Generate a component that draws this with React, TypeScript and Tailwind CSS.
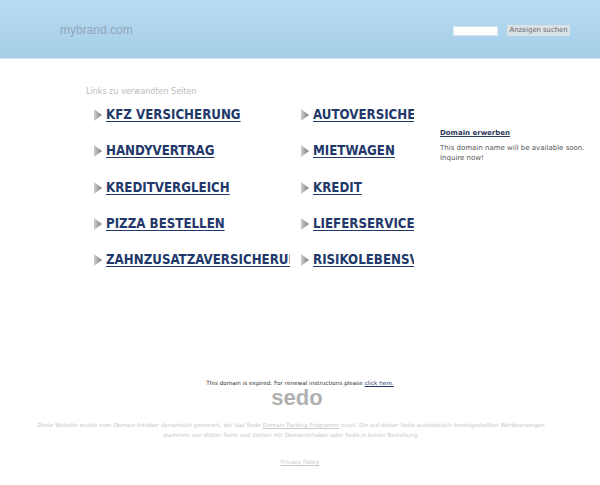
import React from "react";

const links: [string, string][] = [
  ["KFZ VERSICHERUNG", "AUTOVERSICHERUNG"],
  ["HANDYVERTRAG", "MIETWAGEN"],
  ["KREDITVERGLEICH", "KREDIT"],
  ["PIZZA BESTELLEN", "LIEFERSERVICE"],
  ["ZAHNZUSATZAVERSICHERUNG", "RISIKOLEBENSVERSICHERUNG"],
];

function Arrow() {
  return (
    <svg width="8" height="12" viewBox="0 0 8 12" className="shrink-0">
      <defs>
        <linearGradient id="ag" x1="0" y1="0" x2="1" y2="0">
          <stop offset="0" stopColor="#cfcfcf" />
          <stop offset="1" stopColor="#7a7a7a" />
        </linearGradient>
      </defs>
      <polygon points="0,0 8,6 0,12" fill="url(#ag)" />
    </svg>
  );
}

function LinkCell({ text, w }: { text: string; w: string }) {
  return (
    <div className={`flex items-center gap-[4px] overflow-hidden py-[3px] ${w}`}>
      <Arrow />
      <a
        href="#"
        className="whitespace-nowrap text-[#22386a] underline decoration-1 underline-offset-[2px] font-bold text-[13.2px] leading-[16px]"
        style={{ fontFamily: '"DejaVu Sans Condensed", "DejaVu Sans", sans-serif' }}
      >
        {text}
      </a>
    </div>
  );
}

export default function App() {
  const verd = { fontFamily: '"DejaVu Sans", Verdana, sans-serif' };
  return (
    <div className="w-[600px] h-[485px] bg-white overflow-hidden" style={verd}>
      <header className="h-[59px] bg-gradient-to-b from-[#b6dcf2] to-[#a5cde6] border-b border-[#cfe6f2] flex items-start">
        <div className="ml-[60px] mt-[22px] text-[12px] leading-[16px] text-[#92a6ba]" style={{ fontFamily: '"Liberation Sans", Arial, sans-serif' }}>
          mybrand.com
        </div>
        <div className="ml-auto mr-[30px] mt-[25px] flex items-center">
          <div className="w-[45px] h-[10px] bg-white border border-[#d6e6ef]" />
          <div className="ml-[9px] w-[63px] h-[11px] bg-[#d9e1e7] text-[6.8px] leading-[11px] text-[#666] text-center">
            Anzeigen suchen
          </div>
        </div>
      </header>

      <div className="flex">
        <div className="ml-[86px] mt-[27px] w-[335px]">
          <div className="text-[8px] leading-[12px] text-[#bbbbbb]">Links zu verwandten Seiten</div>
          <div className="ml-[8px] mt-[6px] flex flex-col gap-[14.25px]">
            {links.map(([a, b]) => (
              <div key={a} className="flex">
                <div className="w-[207px]">
                  <LinkCell text={a} w="w-[196px]" />
                </div>
                <LinkCell text={b} w="w-[113px]" />
              </div>
            ))}
          </div>
        </div>
        <div className="ml-[19px] mt-[69px] w-[150px]">
          <a href="#" className="block text-[7px] leading-[10px] font-bold text-[#2e3a5c] underline">
            Domain erwerben
          </a>
          <div className="mt-[5px] text-[7px] leading-[10px] text-[#555]">
            This domain name will be available soon.
            <br />
            Inquire now!
          </div>
        </div>
      </div>

      <div className="mt-[107px] flex flex-col items-center">
        <div className="text-[5.7px] leading-[10px] text-[#333]">
          This domain is expired. For renewal instructions please{" "}
          <a href="#" className="underline text-[#1c3770]">click here.</a>
        </div>
        <div className="text-[22px] leading-[20px] font-bold text-[#b0b0b0] ml-[-6px]" style={{ fontFamily: '"Liberation Sans", Arial, sans-serif' }}>
          sedo
        </div>
        <div className="mt-[12px] mr-[18px] w-[560px] text-center text-[5.7px] leading-[10px] text-[#c8c8c8]">
          Diese Website wurde vom Domain-Inhaber dynamisch generiert, der das Sedo{" "}
          <span className="underline">Domain Parking Programm</span> nutzt. Die auf dieser Seite automatisch bereitgestellten Werbeanzeigen
          <br />
          stammen von dritter Seite und stehen mit Domaininhaber oder Sedo in keiner Beziehung.
        </div>
        <div className="mt-[17px] text-[5.7px] leading-[10px] text-[#c8c8c8] underline">Privacy Policy</div>
      </div>
    </div>
  );
}
